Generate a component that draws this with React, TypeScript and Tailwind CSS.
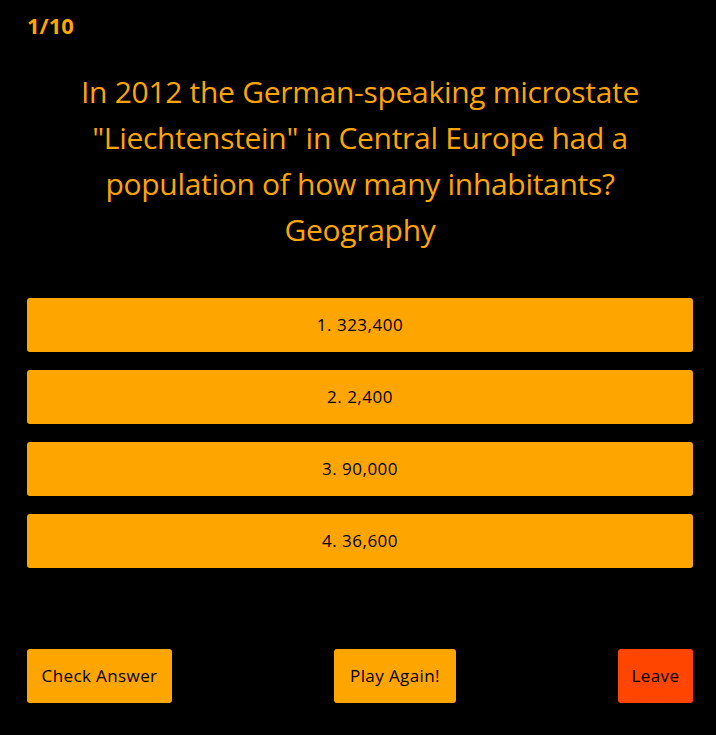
import React from "react";

export default function App() {
  const answers = ["1. 323,400", "2. 2,400", "3. 90,000", "4. 36,600"];
  return (
    <div
      className="min-h-[735px] w-full bg-black pl-[27px] pr-[23px] text-[#ffa500]"
      style={{ fontFamily: '"Open Sans", "Noto Sans", sans-serif' }}
    >
      <div className="pt-[10px] text-[22px] font-bold leading-[30px]">1/10</div>
      <div className="mt-[29px] text-center text-[30px] leading-[46px] tracking-[-0.3px]">
        <div>
          In 2012 the German-speaking microstate
          <br />
          "Liechtenstein" in Central Europe had a
          <br />
          population of how many inhabitants?
        </div>
        <div>Geography</div>
      </div>
      <div className="mt-[45px] flex flex-col gap-[18px]">
        {answers.map((a) => (
          <button
            key={a}
            className="h-[54px] w-full rounded-[3px] bg-[#ffa500] text-center text-[17px] tracking-[0.5px] text-black"
          >
            {a}
          </button>
        ))}
      </div>
      <div className="mt-[81px] flex items-center justify-between">
        <button className="h-[54px] w-[145px] rounded-[3px] bg-[#ffa500] text-[17px] tracking-[0.4px] text-black">
          Check Answer
        </button>
        <button className="h-[54px] w-[122px] rounded-[3px] bg-[#ffa500] text-[17px] tracking-[0.4px] text-black">
          Play Again!
        </button>
        <button className="h-[54px] w-[75px] rounded-[3px] bg-[#ff4500] text-[17px] tracking-[0.4px] text-black">
          Leave
        </button>
      </div>
    </div>
  );
}
